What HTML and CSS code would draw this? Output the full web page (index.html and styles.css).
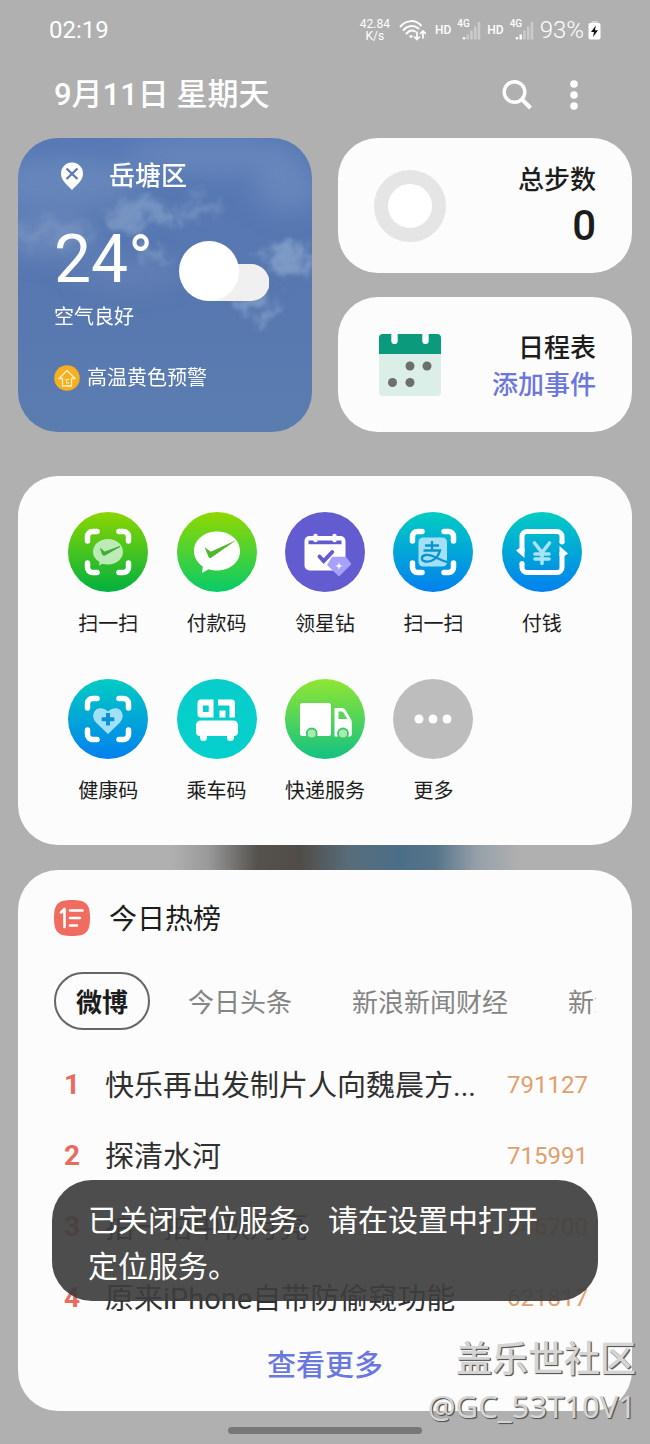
FILE: index.html
```html
<!DOCTYPE html>
<html lang="zh-CN">
<head>
<meta charset="utf-8">
<meta name="viewport" content="width=device-width, initial-scale=1">
<title>今日</title>
<link rel="stylesheet" href="styles.css">
</head>
<body>
<div class="screen">
  <div class="status">
    <time class="clock">02:19</time>
    <div class="status-icons">
      <span class="speed">42.84<br>K/s</span>
      <svg class="wifi" width="27" height="22" viewBox="0 0 27 22" fill="none" stroke="#fff" stroke-width="2" stroke-linecap="round">
        <path d="M1.500 7.500C7.500 .500 16.500 .500 22 6.500M4.500 11C9 6 15.500 6 19.500 9.500M7.500 14.500C10 11.500 13.500 11 16 12.500"/>
        <circle cx="12" cy="17.500" r="1.200" fill="#fff" stroke-width="1"/>
        <path d="M18 13v7m-2.500-2L18 20.500l2.500-2.500M24 19v-6.500m-2.500 2L24 12l2.500 2.500" stroke-width="1.700"/>
      </svg>
      <span class="hd">HD</span>
      <span class="signal"><span class="net">4G</span>
        <svg width="24" height="20" viewBox="0 0 24 20" fill="#fff"><circle cx="7" cy="18.200" r="1.300"/><path opacity=".35" d="M9.500 14.500h2.500v5H9.500zM13.200 10.500h2.500v9h-2.500zM17 6.500h2.500v13H17zM20.700 2h2.500v17.500h-2.500z"/></svg></span>
      <span class="hd">HD</span>
      <span class="signal"><span class="net">4G</span>
        <svg width="24" height="20" viewBox="0 0 24 20" fill="#fff"><circle cx="7" cy="18.200" r="1.300"/><path d="M9.500 14.500h2.500v5H9.500z"/><path opacity=".35" d="M13.200 10.500h2.500v9h-2.500zM17 6.500h2.500v13H17zM20.700 2h2.500v17.500h-2.500z"/></svg></span>
      <span class="percent">93%</span>
      <svg class="battery" width="13" height="20" viewBox="0 0 13 20"><path d="M3.500 1h6v3h-6z" fill="#d5d5d5"/><rect x=".5" y="3" width="12" height="16.500" rx="1.800" fill="#fff"/><path d="M7.800 5.500 3 12h3l-1 5 5-6.800H7z" fill="#111"/></svg>
    </div>
  </div>

  <header class="topbar">
    <h1 class="date">9月11日 星期天</h1>
    <div class="actions">
      <button class="icon-btn" type="button" aria-label="搜索"><svg width="30" height="30" viewBox="0 0 30 30" fill="none" stroke="#fff" stroke-width="3.400"><circle cx="12.500" cy="12" r="10.300"/><path d="m20 19.500 8.500 8.500" stroke-width="4"/></svg></button>
      <button class="icon-btn more-btn" type="button" aria-label="更多选项"><svg width="8" height="30" viewBox="0 0 8 30" fill="#fff"><circle cx="4" cy="4" r="3.800"/><circle cx="4" cy="15" r="3.800"/><circle cx="4" cy="26" r="3.800"/></svg></button>
    </div>
  </header>

  <main>
    <div class="widgets">
      <section class="weather">
        <svg class="sky" viewBox="0 0 294 294" preserveAspectRatio="none" aria-hidden="true">
          <defs>
            <linearGradient id="skyfill" x1="0" y1="0" x2="0" y2="1"><stop offset="0" stop-color="#5679b5"/><stop offset=".5" stop-color="#5777b0"/><stop offset="1" stop-color="#5a7daf"/></linearGradient>
            <filter id="haze" x="-30%" y="-50%" width="160%" height="200%"><feGaussianBlur stdDeviation="12"/></filter>
            <filter id="puff" x="-30%" y="-50%" width="160%" height="200%"><feGaussianBlur in="SourceGraphic" stdDeviation="4" result="b"/><feTurbulence type="fractalNoise" baseFrequency=".05" numOctaves="5" seed="11" result="n"/><feDisplacementMap in="b" in2="n" scale="44" xChannelSelector="R" yChannelSelector="G"/><feGaussianBlur stdDeviation=".8"/></filter>
          </defs>
          <rect width="294" height="294" fill="url(#skyfill)"/>
          <g fill="#86a0c8" filter="url(#haze)">
            <ellipse cx="45" cy="45" rx="80" ry="26" opacity=".35"/>
            <ellipse cx="195" cy="18" rx="90" ry="18" opacity=".35"/>
            <ellipse cx="270" cy="50" rx="35" ry="24" opacity=".35"/>
            <ellipse cx="30" cy="98" rx="50" ry="20" opacity=".4"/>
            <ellipse cx="110" cy="136" rx="55" ry="14" opacity=".25"/>
          </g>
          <g fill="#8ba5cc" filter="url(#puff)">
            <ellipse cx="125" cy="76" rx="37" ry="13" opacity=".6"/>
            <ellipse cx="183" cy="69" rx="19" ry="10" opacity=".45"/>
            <ellipse cx="35" cy="95" rx="42" ry="10" opacity=".3"/>
            <ellipse cx="138" cy="116" rx="17" ry="9" opacity=".5"/>
            <ellipse cx="266" cy="121" rx="22" ry="12" opacity=".75"/>
            <ellipse cx="242" cy="167" rx="16" ry="12" opacity=".65"/>
          </g>
        </svg>
        <div class="weather-body">
          <div class="place">
            <svg width="24" height="28" viewBox="0 0 24 28"><path d="M12 .5A11 11 0 0 0 1 11.500C1 18 6 22 12 28c6-6 11-10 11-16.500A11 11 0 0 0 12 .5Z" fill="#fff"/><path d="m6.500 6.500 11 10.500m0-10.500L6.500 17" stroke="#5778b1" stroke-width="2.300" fill="none"/></svg>
            <h2 class="place-name">岳塘区</h2>
          </div>
          <div class="reading">
            <span class="temp">24°</span>
            <svg class="cloud" width="90" height="60" viewBox="0 0 90 60"><path d="M30 23h42a18 18 0 0 1 0 37H30z" fill="#f0f0f0"/><circle cx="30" cy="30" r="30" fill="#fff"/></svg>
          </div>
          <p class="air">空气良好</p>
          <p class="alert">
            <svg width="26" height="26" viewBox="0 0 26 26" fill="none"><circle cx="13" cy="13" r="12.800" fill="#f6b01d"/><path d="m13 5.500 8 8h-3.500V21h-9v-7.500H5z" stroke="#fff2cf" stroke-width="1.300" stroke-linejoin="round"/><path d="M15 14.500h-2.500V18H15M11 14v.8" stroke="#fff2cf"/></svg>
            <span>高温黄色预警</span>
          </p>
        </div>
      </section>
      <div class="side">
        <section class="tile">
          <svg width="72" height="72" viewBox="0 0 72 72"><circle cx="36" cy="36" r="29" fill="#fff" stroke="#e5e5e5" stroke-width="14"/></svg>
          <div class="tile-text"><h2 class="tile-title">总步数</h2><p class="steps">0</p></div>
        </section>
        <section class="tile">
          <svg class="calendar" width="72" height="62" viewBox="0 0 72 62"><rect x="5" width="62" height="62" rx="4" fill="#dbeee7"/><path d="M5 20V4a4 4 0 0 1 4-4h8.500v7a3 3 0 0 0 6 0V0h25v7a3 3 0 0 0 6 0V0H63a4 4 0 0 1 4 4v16z" fill="#0b9a7b"/><path d="M17.500 0h6v7a3 3 0 0 1-6 0zM48.500 0h6v7a3 3 0 0 1-6 0z" fill="#fcfcfc"/><g fill="#6b6f6d"><circle cx="36" cy="32" r="4.500"/><circle cx="53" cy="32" r="4.500"/><circle cx="18.500" cy="48.500" r="4.500"/><circle cx="36" cy="48.500" r="4.500"/></g></svg>
          <div class="tile-text"><h2 class="tile-title">日程表</h2><a class="add" href="#">添加事件</a></div>
        </section>
      </div>
    </div>

    <div class="stack">
      <nav class="apps" aria-label="快捷服务">
        <a class="app" href="#"><svg class="disc green" viewBox="0 0 80 80"><g fill="none" stroke="#fff" stroke-width="5.500" stroke-linecap="round"><path d="M19.500 29v-4.500a5 5 0 0 1 5-5H29M51 19.500h4.500a5 5 0 0 1 5 5V29M60.500 51v4.500a5 5 0 0 1-5 5H51M29 60.500h-4.500a5 5 0 0 1-5-5V51"/></g><path d="M40 27c8.500 0 15 5.500 15 12.800S48.500 52.500 40 52.500c-2 0-3.700-.3-5.500-.8L31 53.500l.6-3.500C27.500 47.500 25 44 25 39.800 25 32.500 31.500 27 40 27Z" fill="#bdebb5"/><path d="m32.500 36.500 4 3.500 15.500-5.500-15.500 8.800-1.800-.5z" fill="#3fae33" stroke="#3fae33"/></svg><span>扫一扫</span></a>
        <a class="app" href="#"><svg class="disc lime" viewBox="0 0 80 80"><path d="M40 19.500c13 0 23 8.500 23 19.500S53 58.500 40 58.500c-3 0-6-.5-8.500-1.300L25 61l.8-6.500C20 50.500 17 45 17 39c0-11 10-19.500 23-19.500Z" fill="#fff"/><path d="m27.500 35 6.300 4.700L59.500 28 34.500 45.500c-1.500 1-2.300.8-3-.8z" fill="#4fb82c"/></svg><span>付款码</span></a>
        <a class="app" href="#"><svg class="disc violet" viewBox="0 0 80 80"><rect x="19.500" y="24" width="41" height="34.500" rx="5" fill="#fff"/><path d="M23.500 28.500h33v3.800h-33z" fill="#625cd0"/><path d="M30.500 24v4M49.500 24v4" stroke="#fff" stroke-width="4.500" stroke-linecap="round"/><path d="m34.500 44.500 4.200 4.500 8.500-9" fill="none" stroke="#625cd0" stroke-width="4" stroke-linecap="round"/><path d="M47.500 45.500h13l5 6.500L54 63.500 43 53z" fill="#a6a1ff" stroke="#a6a1ff" stroke-width="1.500" stroke-linejoin="round"/><path d="M54 50c.6 3 1 3.500 4 4-3 .6-3.400 1-4 4-.6-3-1-3.400-4-4 3-.5 3.400-1 4-4z" fill="#fff"/></svg><span>领星钻</span></a>
        <a class="app" href="#"><svg class="disc blue" viewBox="0 0 80 80"><g fill="none" stroke="#fff" stroke-width="5.500" stroke-linecap="round"><path d="M19.500 29v-4.500a5 5 0 0 1 5-5H29M51 19.500h4.500a5 5 0 0 1 5 5V29M60.500 51v4.500a5 5 0 0 1-5 5H51M29 60.500h-4.500a5 5 0 0 1-5-5V51"/></g><rect x="25.500" y="25.500" width="28.500" height="29" rx="4.500" fill="#a2e0f5"/><g fill="none" stroke="#0b93cf" stroke-width="2.300"><path d="M32 33.500h14M39 29v9.500M30.500 38.500H47C45 46 39 50.500 32.500 49.500c-5-.8-4.800-6 .5-6.500 6.500-.6 12 4.500 21 7"/></g></svg><span>扫一扫</span></a>
        <a class="app" href="#"><svg class="disc blue" viewBox="0 0 80 80"><g fill="none" stroke="#fff" stroke-width="5"><path d="M20 40V24.500a5 5 0 0 1 5-5h30a5 5 0 0 1 5 5V31M20 51v4.500a5 5 0 0 0 5 5h30a5 5 0 0 0 5-5V40"/></g><path d="M17.500 36 14 38.500 22.500 46V36zM62.500 44 66 41.500 57.500 34v10z" fill="#fff"/><circle cx="60" cy="30" r="2.500" fill="#fff"/><circle cx="20" cy="51.500" r="2.500" fill="#fff"/><path d="m32.500 31 7.500 9.500 7.500-9.500M40 40v11.500M33 42h14M33 47h14" fill="none" stroke="#a6e4f6" stroke-width="3.600" stroke-linecap="round"/></svg><span>付钱</span></a>
        <a class="app" href="#"><svg class="disc blue" viewBox="0 0 80 80"><g fill="none" stroke="#fff" stroke-width="5.500" stroke-linecap="round"><path d="M19.500 29v-4.500a5 5 0 0 1 5-5H29M51 19.500h4.500a5 5 0 0 1 5 5V29M60.500 51v4.500a5 5 0 0 1-5 5H51M29 60.500h-4.500a5 5 0 0 1-5-5V51"/></g><path d="M40 55 28 43.500C20.500 35 30 23.500 40 32.500 50 23.500 59.500 35 52 43.500z" fill="#a2e0f5"/><path d="M40 34v12.500M33.700 40.300h12.600" stroke="#0b94d4" stroke-width="4"/></svg><span>健康码</span></a>
        <a class="app" href="#"><svg class="disc teal" viewBox="0 0 80 80"><path fill="#fff" fill-rule="evenodd" d="M24 20.500h12.500v18H24a3.500 3.500 0 0 1-3.500-3.500V24a3.500 3.500 0 0 1 3.500-3.500zM26 26.500v6.500h5.700v-6.500zM41 20.500h13.500A3.500 3.500 0 0 1 58 24v14.500h-5.500V26.500H41zM42.500 31.500h6v7h-6z"/><path fill="#fff" d="M24 41.500h32.500a4.500 4.500 0 0 1 4.500 4.500v7a4 4 0 0 1-4 4v1.500a3.500 3.500 0 0 1-7 0V57H30v1.500a3.500 3.500 0 0 1-7 0V57a4 4 0 0 1-4-4v-7a4.500 4.500 0 0 1 5-4.500z"/></svg><span>乘车码</span></a>
        <a class="app" href="#"><svg class="disc leaf" viewBox="0 0 80 80"><rect x="15" y="24" width="31" height="33" rx="2.500" fill="#fff"/><path fill="#fff" fill-rule="evenodd" d="M49.500 29h7c2 0 3.500 1 4.300 2.500L66 40.500c.5 1 .8 2 .8 3V55a2.500 2.500 0 0 1-2.500 2.500H49.500zM53.500 32.500v7.500h8.800l-3.600-6c-.6-1-1.200-1.500-2.200-1.500z"/><g fill="#a4ecb0" stroke="#3ec665" stroke-width="1.800"><circle cx="26.700" cy="54.500" r="5"/><circle cx="58" cy="54.500" r="5"/></g></svg><span>快递服务</span></a>
        <a class="app" href="#"><svg class="disc gray" viewBox="0 0 80 80" fill="#fff"><circle cx="26" cy="40" r="4.500"/><circle cx="40" cy="40" r="4.500"/><circle cx="54" cy="40" r="4.500"/></svg><span>更多</span></a>
      </nav>

      <section class="hot">
        <div class="hot-head">
          <svg width="36" height="36" viewBox="0 0 36 36"><path d="M18 0c14 0 18 4 18 18s-4 18-18 18S0 32 0 18 4 0 18 0z" fill="#f06c60"/><path d="M7 12.500 10.500 9v18M16 10.500h12.500M16 18h10M16 25.500h7" fill="none" stroke="#fff" stroke-width="2.600" stroke-linecap="round" stroke-linejoin="round"/></svg>
          <h2 class="hot-title">今日热榜</h2>
        </div>
        <div class="tabs" role="tablist">
          <button class="tab active" type="button" role="tab" aria-selected="true">微博</button>
          <button class="tab" type="button" role="tab" aria-selected="false">今日头条</button>
          <button class="tab" type="button" role="tab" aria-selected="false">新浪新闻财经</button>
          <button class="tab" type="button" role="tab" aria-selected="false">新浪</button>
        </div>
        <ol class="list">
          <li class="row"><span class="rank">1</span><a class="topic" href="#">快乐再出发制片人向魏晨方...</a><span class="heat">791127</span></li>
          <li class="row"><span class="rank">2</span><a class="topic" href="#">探清水河</a><span class="heat">715991</span></li>
          <li class="row"><span class="rank">3</span><a class="topic" href="#">拍一拍中秋月亮</a><span class="heat">646700</span></li>
          <li class="row"><span class="rank">4</span><a class="topic" href="#">原来iPhone自带防偷窥功能</a><span class="heat">621817</span></li>
        </ol>
        <button class="see-more" type="button">查看更多</button>
        <div class="toast" role="status">已关闭定位服务。请在设置中打开定位服务。</div>
      </section>
    </div>
  </main>
  <div class="home-bar"></div>
  <div class="watermark"><span class="wm-name">盖乐世社区</span><span class="wm-user">@GC_53T10V1</span></div>
</div>
</body>
</html>
```

FILE: styles.css
```css
* { box-sizing: border-box; }
body { margin: 0; background: #b0b0b0; font-family: Roboto, "Noto Sans CJK SC", sans-serif; color: #1c1c1c; }
h1, h2, p, ol { margin: 0; padding: 0; font-weight: 500; }
a { color: inherit; text-decoration: none; }
button { font: inherit; color: inherit; background: none; border: 0; padding: 0; cursor: pointer; }
svg { display: block; flex: none; }

.screen { position: relative; padding: 0 18px 10px; }

.status { display: flex; justify-content: space-between; align-items: center; height: 60px; padding: 0 31px; color: #fff; }
.clock { font-size: 24px; font-weight: 400; }
.status-icons { display: flex; align-items: center; }
.speed { font-size: 12px; line-height: 12px; text-align: center; font-weight: 400; margin-right: 9px; }
.wifi { margin-right: 9px; }
.hd { font-size: 12px; font-weight: 500; margin-right: 6px; }
.signal { position: relative; margin-right: 6px; }
.net { position: absolute; left: 0; top: -1px; font-size: 10px; line-height: 10px; font-weight: 500; }
.percent { font-size: 24px; font-weight: 300; margin-right: 4px; }

.topbar { display: flex; justify-content: space-between; align-items: center; height: 70px; padding: 0 36px; margin-bottom: 8px; color: #fff; }
.date { font-size: 31px; line-height: 40px; font-weight: 500; }
.actions { display: flex; align-items: center; gap: 38px; }
.more-btn { margin-right: 18px; }

.widgets { display: grid; grid-template-columns: 1fr 1fr; gap: 26px; margin-bottom: 44px; }
.weather { position: relative; overflow: hidden; border-radius: 40px; color: #fff; }
.sky { position: absolute; inset: 0; width: 100%; height: 100%; }
.weather-body { position: relative; padding: 20px 36px 38px; }
.place { display: flex; align-items: center; gap: 25px; height: 36px; padding-left: 6px; }
.place-name { font-size: 26px; line-height: 36px; }
.reading { display: flex; align-items: flex-start; justify-content: space-between; margin: 28px 7px 0 0; height: 79px; }
.temp { font-size: 66px; line-height: 76px; }
.cloud { align-self: flex-end; }
.air { font-size: 20px; line-height: 32px; font-weight: 400; }
.alert { display: flex; align-items: center; gap: 7px; margin-top: 30px; font-size: 20px; line-height: 30px; font-weight: 400; }

.side { display: grid; grid-template-rows: 1fr 1fr; gap: 24px; }
.tile { display: flex; align-items: center; justify-content: space-between; min-height: 135px; padding: 0 36px; background: #fcfcfc; border-radius: 40px; }
.tile-text { text-align: right; padding-top: 2px; }
.tile-title { font-size: 26px; line-height: 38px; }
.steps { font-size: 42px; line-height: 54px; }
.add { display: block; font-size: 26px; line-height: 36px; font-weight: 500; color: #6b77dd; }

.stack { display: grid; gap: 25px; background: linear-gradient(90deg, #b0b0b0 25%, #999 31%, #55524e 39%, #504d49 46%, #586d7b 54%, #4b6e88 62%, #56748a 68%, #98a1a9 75%, #b0b0b0 82%); }
.apps { display: grid; grid-template-columns: repeat(5, 1fr); row-gap: 41px; padding: 36px 36px 40px; background: #fcfcfc; border-radius: 40px; }
.app { display: flex; flex-direction: column; align-items: center; gap: 18px; font-size: 20px; line-height: 28px; }
.disc { width: 80px; height: 80px; border-radius: 50%; }
.green { background: linear-gradient(#8bd600, #00b140); }
.lime { background: linear-gradient(#90d800, #08cb68); }
.violet { background: #625cd0; }
.blue { background: linear-gradient(#02ccc2, #0280ef); }
.teal { background: linear-gradient(#08cdcb, #05d0cc); }
.leaf { background: linear-gradient(#91e632, #12c282); }
.gray { background: #bdbdbd; }

.hot { position: relative; padding: 29px 36px 24px; background: #fcfcfc; border-radius: 40px; min-width: 0; }
.hot-head { display: flex; align-items: center; gap: 19px; height: 37px; }
.hot-title { font-size: 28px; line-height: 36px; padding-top: 4px; font-weight: 400; }
.tabs { display: flex; gap: 16px; margin-top: 36px; overflow: hidden; }
.tab { flex: none; height: 58px; padding: 0 20px 2px; border: 2px solid transparent; border-radius: 29px; font-size: 26px; color: #858585; }
.tab.active { border-color: #666; font-weight: 700; color: #1c1c1c; }
.list { list-style: none; margin-top: 19px; padding: 0 8px 0 10px; }
.row { display: grid; grid-template-columns: 41px 1fr auto; align-items: center; height: 71px; }
.rank { font-size: 28px; font-weight: 700; color: #e96b60; }
.topic { font-size: 29px; line-height: 40px; padding-top: 2px; font-weight: 400; color: #303030; white-space: nowrap; }
.heat { font-size: 24px; font-weight: 400; color: #e0a06c; }
.see-more { display: block; margin: 12px auto 0; font-size: 29px; line-height: 42px; font-weight: 500; color: #6b77e0; }
.toast { position: absolute; left: 34px; right: 34px; bottom: 110px; padding: 18px 36px 11px; border-radius: 40px; background: rgba(62, 62, 62, .92); color: #fff; font-size: 30px; line-height: 46px; }

.home-bar { width: 194px; height: 7px; margin: 16px auto 0; border-radius: 4px; background: #777; }
.watermark { position: absolute; right: 14px; bottom: 16px; display: flex; flex-direction: column; align-items: flex-end; color: #d5d5d5; text-shadow: 1px 1px 1px #555, 1px 1px 0 #666; pointer-events: none; }
.wm-name { font-size: 36px; line-height: 48px; font-weight: 500; }
.wm-user { font-family: "Noto Sans", sans-serif; font-size: 31px; line-height: 44px; }
```
